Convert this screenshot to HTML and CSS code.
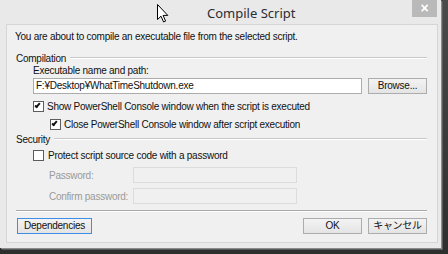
FILE: index.html
```html
<!DOCTYPE html>
<html lang="en">
<head>
  <meta charset="UTF-8"/>
  <title>Compile Script</title>
  <link rel="stylesheet" href="styles.css">
</head>
<body>
  <div class="window">
    <!-- Title bar -->
    <div class="titlebar">
      <span class="title">Compile Script</span>
      <span class="close">&#215;</span>
    </div>

    <!-- mouse pointer over the title bar -->
    <svg class="cursor" width="12" height="19" viewBox="0 0 12 19">
      <path d="M0.5 0.5 L0.5 15.5 L4 12.2 L6.6 18 L8.6 17.1 L6.1 11.4 L10.8 11.4 Z" fill="#fff" stroke="#000" stroke-width="1"/>
    </svg>

    <div class="client">
      <div class="intro">You are about to compile an executable file from the selected script.</div>

      <!-- Compilation -->
      <div class="legend legend-first"><span>Compilation</span><i></i></div>
      <div class="field-label">Executable name and path:</div>
      <div class="path-row">
        <div class="textbox">F:¥Desktop¥WhatTimeShutdown.exe</div>
        <button class="btn btn-browse">Browse...</button>
      </div>
      <div class="check check-show">
        <span class="box checked"></span>
        <span>Show PowerShell Console window when the script is executed</span>
      </div>
      <div class="check check-close">
        <span class="box checked"></span>
        <span>Close PowerShell Console window after script execution</span>
      </div>

      <!-- Security -->
      <div class="legend legend-security"><span>Security</span><i></i></div>
      <div class="check check-protect">
        <span class="box"></span>
        <span>Protect script source code with a password</span>
      </div>
      <div class="pw-row pw-first">
        <span class="pw-label">Password:</span>
        <div class="textbox disabled"></div>
      </div>
      <div class="pw-row">
        <span class="pw-label">Confirm password:</span>
        <div class="textbox disabled"></div>
      </div>

      <div class="separator"></div>

      <div class="buttons">
        <button class="btn btn-default btn-deps">Dependencies</button>
        <button class="btn btn-ok">OK</button>
        <button class="btn btn-cancel">キャンセル</button>
      </div>
    </div>
  </div>
</body>
</html>
```

FILE: styles.css
```css
*, *::before, *::after { box-sizing: border-box; }

body {
  margin: 0;
  width: 448px; height: 254px;
  overflow: hidden;
  background: linear-gradient(#4a4a4a, #2e2e2e);
  font-family: 'Liberation Sans', Arial, 'Noto Sans CJK JP', sans-serif;
  font-size: 10px;
  letter-spacing: -0.25px;
  color: #111;
}

/* Window frame */
.window {
  position: relative;
  width: 441px; height: 248px;
  background: #e9e9e9;
  box-shadow: 1px 1px 0 #8c8c8c, 2px 2px 0 #5a5a5a;
  display: flex; flex-direction: column;
}

.titlebar {
  height: 24px;
  display: flex; align-items: flex-start;
}
.title {
  margin: 4px 0 0 207px;
  font-family: 'Noto Sans', 'Liberation Sans', sans-serif;
  font-size: 13px; letter-spacing: 0;
  line-height: 19px;
  color: #2c2c34;
}
.close {
  margin-left: auto; margin-right: 4px;
  width: 25px; height: 17px;
  background: #b9b9b9; color: #fff;
  font-size: 14px; font-weight: bold; letter-spacing: 0;
  line-height: 16px; text-align: center;
}

.cursor { position: absolute; left: 157px; top: 4px; }

/* Client area */
.client {
  flex: 1;
  margin: 0 3px 5px 6px;
  border: 1px solid #d6d6d6;
  background: #f0f0f0;
  padding: 5px 10px 0 9px;
  display: flex; flex-direction: column;
}

.intro { height: 14px; line-height: 14px; margin-left: -1px; }

.legend {
  height: 13px; line-height: 13px;
  display: flex; align-items: center;
}
.legend i {
  flex: 1; height: 2px; margin-left: 4px; margin-top: -1px;
  border-top: 1px solid #c9c9c9; border-bottom: 1px solid #fff;
}
.legend-first { margin-top: 8px; }
.legend-security { margin-top: 2px; }

.field-label { height: 12px; line-height: 12px; padding-left: 17px; }

.path-row {
  margin-top: 1px; height: 16px;
  display: flex; padding-left: 17px; gap: 6px;
}
.textbox {
  height: 16px; line-height: 14px;
  border: 1px solid #acacac;
  background: #fff;
  padding-left: 2px;
}
.path-row .textbox { width: 329px; }
.textbox.disabled {
  width: 164px;
  background: #f0f0f0;
  border-color: #dcdcdc;
}

.btn {
  height: 16px; padding: 0;
  font: inherit; letter-spacing: -0.25px; color: #111;
  line-height: 14px;
  border: 1px solid #acacac;
  background: linear-gradient(#f3f3f3, #e4e4e4);
}
.btn-browse { width: 59px; }

.check {
  height: 13px; line-height: 13px;
  display: flex; align-items: center; gap: 3px;
}
.check-show { margin-top: 6px; padding-left: 17px; }
.check-close { margin-top: 5px; padding-left: 34px; }
.check-protect { margin-top: 3px; padding-left: 17px; gap: 4px; }

.box {
  width: 11px; height: 11px;
  border: 1px solid #5d5d5d;
  background: #fff;
  position: relative;
}
.box.checked::after {
  content: '';
  position: absolute; left: 2px; top: 0;
  width: 3px; height: 6px;
  border: solid #111; border-width: 0 2px 2px 0;
  transform: rotate(40deg);
}

.pw-row {
  margin-top: 5px; height: 16px;
  display: flex; align-items: center;
}
.pw-row.pw-first { margin-top: 5px; }
.pw-label { width: 117px; padding-left: 33px; color: #9a9a9a; }

.separator {
  margin-top: 6px; height: 2px;
  border-top: 1px solid #a9a9a9; border-bottom: 1px solid #fff;
}

.buttons {
  margin-top: 6px; height: 16px;
  display: flex; gap: 6px;
}
.btn-deps { width: 75px; margin-left: 1px; margin-right: auto; }
.btn-default { border-color: #3c8ee6; }
.btn-ok { width: 59px; }
.btn-cancel { width: 59px; }
```
